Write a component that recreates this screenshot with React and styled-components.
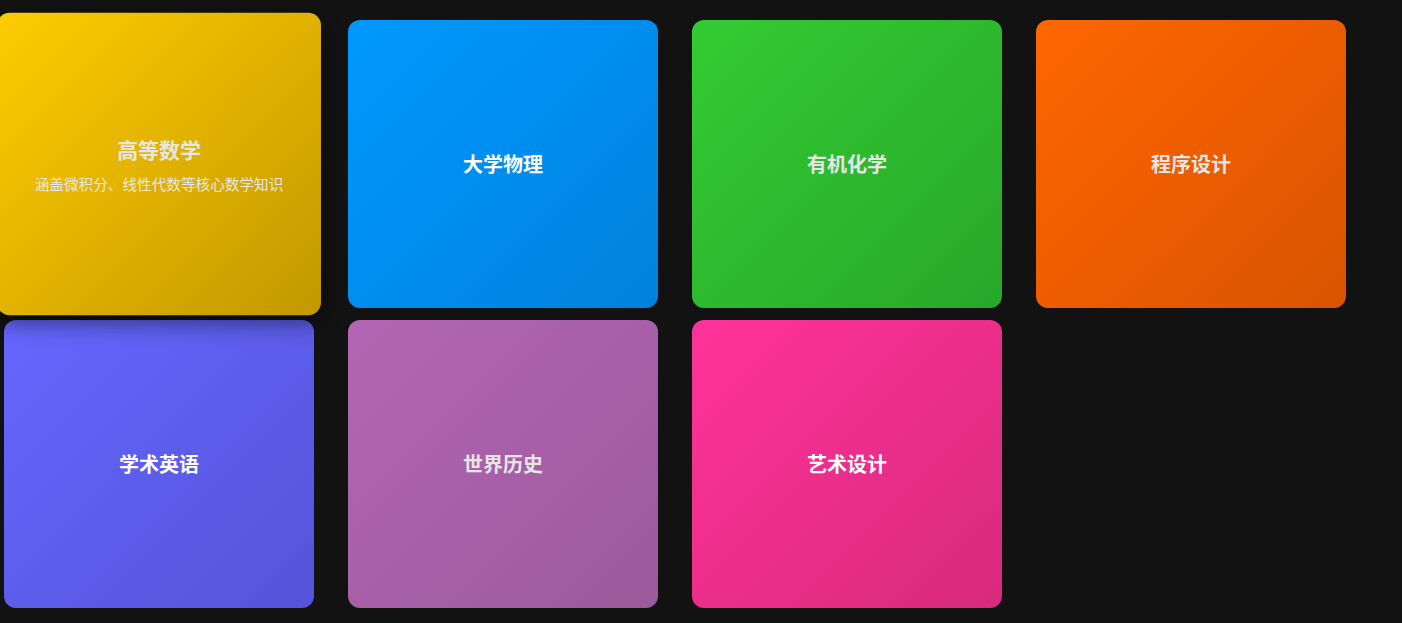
import React from 'react';
import styled, { createGlobalStyle } from 'styled-components';

const GlobalStyle = createGlobalStyle`
  html, body {
    margin: 0;
    padding: 0;
    background: #121212;
  }
  body {
    font-family: 'Noto Sans CJK SC', 'Noto Sans', sans-serif;
  }
`;

const Page = styled.div`
  width: 1402px;
  height: 623px;
  background: #121212;
  box-sizing: border-box;
  padding: 20px 0 0 4px;
  overflow: hidden;
`;

const Grid = styled.div`
  display: grid;
  grid-template-columns: repeat(4, 310px);
  grid-auto-rows: 288px;
  column-gap: 34px;
  row-gap: 12px;
`;

const Card = styled.div`
  display: flex;
  flex-direction: column;
  align-items: center;
  justify-content: center;
  border-radius: 12px;
  background: linear-gradient(135deg, ${p => p.$from}, ${p => p.$to});
  color: ${p => p.$ink};
  transform: ${p => (p.$active ? 'scale(1.045, 1.05)' : 'none')};
  box-shadow: ${p => (p.$active ? '0 8px 20px rgba(0, 0, 0, 0.45)' : 'none')};
  position: relative;
  z-index: ${p => (p.$active ? 2 : 1)};
`;

const Title = styled.div`
  font-size: 20px;
  font-weight: 700;
  line-height: 28px;
`;

const Desc = styled.div`
  margin-top: 9px;
  font-size: 14px;
  line-height: 20px;
`;

const subjects = [
  { title: '高等数学', desc: '涵盖微积分、线性代数等核心数学知识', from: '#ffcc00', to: '#c29800', ink: '#e6e6e6', active: true },
  { title: '大学物理', from: '#0099ff', to: '#0081dd', ink: '#ffffff' },
  { title: '有机化学', from: '#33cc33', to: '#28a72a', ink: '#e6e6e6' },
  { title: '程序设计', from: '#ff6600', to: '#d95400', ink: '#e6e6e6' },
  { title: '学术英语', from: '#6666ff', to: '#5454d9', ink: '#ffffff' },
  { title: '世界历史', from: '#b366b3', to: '#9b5a9c', ink: '#e6e6e6' },
  { title: '艺术设计', from: '#ff3399', to: '#d82a7c', ink: '#ffffff' },
];

const App = () => {
  return (
    <Page>
      <GlobalStyle />
      <Grid>
        {subjects.map(s => (
          <Card key={s.title} $from={s.from} $to={s.to} $ink={s.ink} $active={s.active}>
            <Title>{s.title}</Title>
            {s.active && <Desc>{s.desc}</Desc>}
          </Card>
        ))}
      </Grid>
    </Page>
  );
};

export default App;
